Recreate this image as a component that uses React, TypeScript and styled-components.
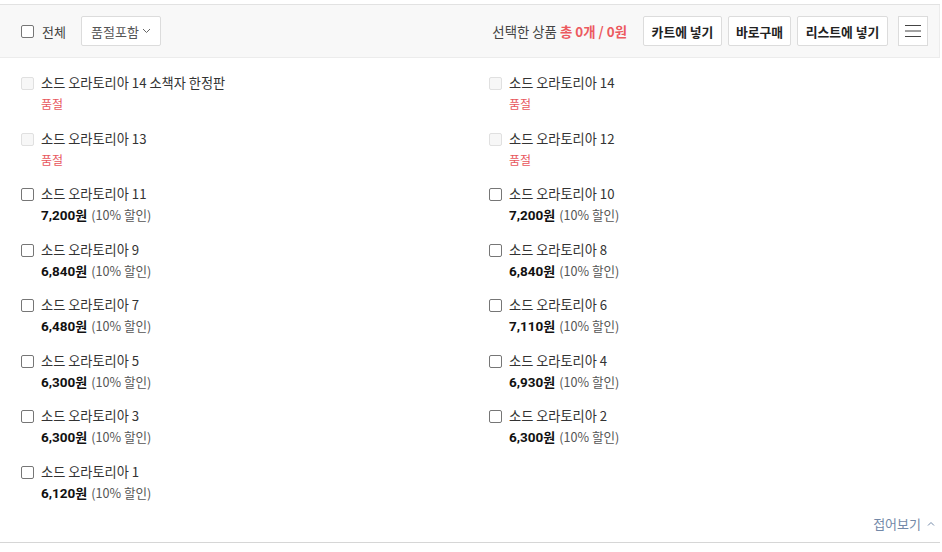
import React from "react";
import styled, { createGlobalStyle } from "styled-components";

const Global = createGlobalStyle`
  html, body { margin: 0; padding: 0; background: #fff; }
  body { font-family: "Noto Sans CJK KR", "Noto Sans", sans-serif; color: #333; }
  * { box-sizing: border-box; }
`;

const Wrap = styled.div`
  width: 940px;
  margin-top: 4px;
  border-top: 1px solid #e2e2e2;
  border-bottom: 1px solid #d6d6d6;
`;

const Header = styled.div`
  height: 53px;
  background: #f8f8f8;
  border-bottom: 1px solid #ececec;
  border-right: 1px solid #ececec;
  display: flex;
  align-items: center;
  padding: 0 11px 0 21px;
`;

const Box = styled.span<{ $disabled?: boolean }>`
  width: 13px;
  height: 13px;
  flex: none;
  border-radius: 2px;
  border: 1px solid ${(p) => (p.$disabled ? "#e0e0e0" : "#767676")};
  background: ${(p) => (p.$disabled ? "#f7f7f7" : "#fff")};
`;

const AllLabel = styled.span`
  margin-left: 8px;
  font-size: 13px;
  color: #444;
`;

const Dropdown = styled.button`
  margin-left: 15px;
  height: 30px;
  width: 80px;
  border: 1px solid #dcdcdc;
  border-radius: 2px;
  background: #fff;
  font-family: inherit;
  font-size: 13px;
  color: #555;
  display: flex;
  align-items: center;
  justify-content: center;
  gap: 3px;
  padding: 0;
`;

const Spacer = styled.div`
  flex: 1;
`;

const Summary = styled.span`
  font-size: 13.4px;
  color: #444;
  margin-right: 10px;
`;

const Red = styled.b`
  color: #ec5a5f;
  font-weight: 700;
`;

const Btn = styled.button<{ $w: number }>`
  width: ${(p) => p.$w}px;
  height: 30px;
  padding: 0;
  border: 1px solid #dcdcdc;
  border-radius: 2px;
  background: #fff;
  font-family: inherit;
  font-size: 12.8px;
  font-weight: 700;
  color: #222;
  margin-left: 6px;
`;

const Menu = styled.button`
  width: 30px;
  height: 30px;
  margin-left: 10px;
  border: 1px solid #dcdcdc;
  background: #fff;
  padding: 0;
  display: flex;
  align-items: center;
  justify-content: center;
`;

const Grid = styled.div`
  display: grid;
  grid-template-columns: 468px 468px;
  grid-auto-rows: 55.5px;
  padding: 15px 0 0 21px;
`;

const Item = styled.div`
  display: flex;
  align-items: flex-start;
`;

const ItemBox = styled(Box)`
  margin-top: 4px;
`;

const Info = styled.div`
  margin-left: 7px;
  display: flex;
  flex-direction: column;
`;

const Title = styled.div`
  font-size: 13.2px;
  line-height: 20px;
  color: #333;
`;

const Sold = styled.div`
  font-size: 12px;
  line-height: 22px;
  color: #e8575d;
`;

const PriceRow = styled.div`
  line-height: 22px;
  display: flex;
  align-items: baseline;
`;

const Price = styled.b`
  font-size: 13.5px;
  font-weight: 700;
  color: #111;
  font-family: "Roboto", "Noto Sans CJK KR", sans-serif;
`;

const Won = styled.span`
  font-size: 13px;
  font-weight: 700;
  color: #111;
`;

const Discount = styled.span`
  margin-left: 4px;
  font-size: 12.6px;
  color: #555;
`;

const Footer = styled.div`
  margin-top: -11px;
  height: 36px;
  display: flex;
  align-items: center;
  justify-content: flex-end;
  padding: 0 5px 2px 0;
`;

const Fold = styled.span`
  font-size: 13px;
  color: #7389a8;
  display: flex;
  align-items: center;
  gap: 6px;
`;

type Product = { name: string; sold?: boolean; price?: string };

const items: Product[] = [
  { name: "소드 오라토리아 14 소책자 한정판", sold: true },
  { name: "소드 오라토리아 14", sold: true },
  { name: "소드 오라토리아 13", sold: true },
  { name: "소드 오라토리아 12", sold: true },
  { name: "소드 오라토리아 11", price: "7,200" },
  { name: "소드 오라토리아 10", price: "7,200" },
  { name: "소드 오라토리아 9", price: "6,840" },
  { name: "소드 오라토리아 8", price: "6,840" },
  { name: "소드 오라토리아 7", price: "6,480" },
  { name: "소드 오라토리아 6", price: "7,110" },
  { name: "소드 오라토리아 5", price: "6,300" },
  { name: "소드 오라토리아 4", price: "6,930" },
  { name: "소드 오라토리아 3", price: "6,300" },
  { name: "소드 오라토리아 2", price: "6,300" },
  { name: "소드 오라토리아 1", price: "6,120" },
];

export default function App() {
  return (
    <>
      <Global />
      <Wrap>
        <Header>
          <Box />
          <AllLabel>전체</AllLabel>
          <Dropdown>
            품절포함
            <svg width="9" height="6" viewBox="0 0 9 6">
              <path d="M1 1l3.5 3.5L8 1" fill="none" stroke="#666" strokeWidth="1" />
            </svg>
          </Dropdown>
          <Spacer />
          <Summary>
            선택한 상품 <Red>총 0개 / 0원</Red>
          </Summary>
          <Btn $w={79}>카트에 넣기</Btn>
          <Btn $w={63}>바로구매</Btn>
          <Btn $w={91}>리스트에 넣기</Btn>
          <Menu aria-label="menu">
            <svg width="16" height="14" viewBox="0 0 16 14">
              <path d="M0 1.5h16M0 7h16M0 12.5h16" stroke="#444" strokeWidth="1" />
            </svg>
          </Menu>
        </Header>
        <Grid>
          {items.map((it) => (
            <Item key={it.name}>
              <ItemBox $disabled={it.sold} />
              <Info>
                <Title>{it.name}</Title>
                {it.sold ? (
                  <Sold>품절</Sold>
                ) : (
                  <PriceRow>
                    <Price>{it.price}</Price>
                    <Won>원</Won>
                    <Discount>(10% 할인)</Discount>
                  </PriceRow>
                )}
              </Info>
            </Item>
          ))}
        </Grid>
        <Footer>
          <Fold>
            접어보기
            <svg width="8" height="5" viewBox="0 0 8 5">
              <path d="M1 4.5l3-3 3 3" fill="none" stroke="#7389a8" strokeWidth="1" />
            </svg>
          </Fold>
        </Footer>
      </Wrap>
    </>
  );
}
